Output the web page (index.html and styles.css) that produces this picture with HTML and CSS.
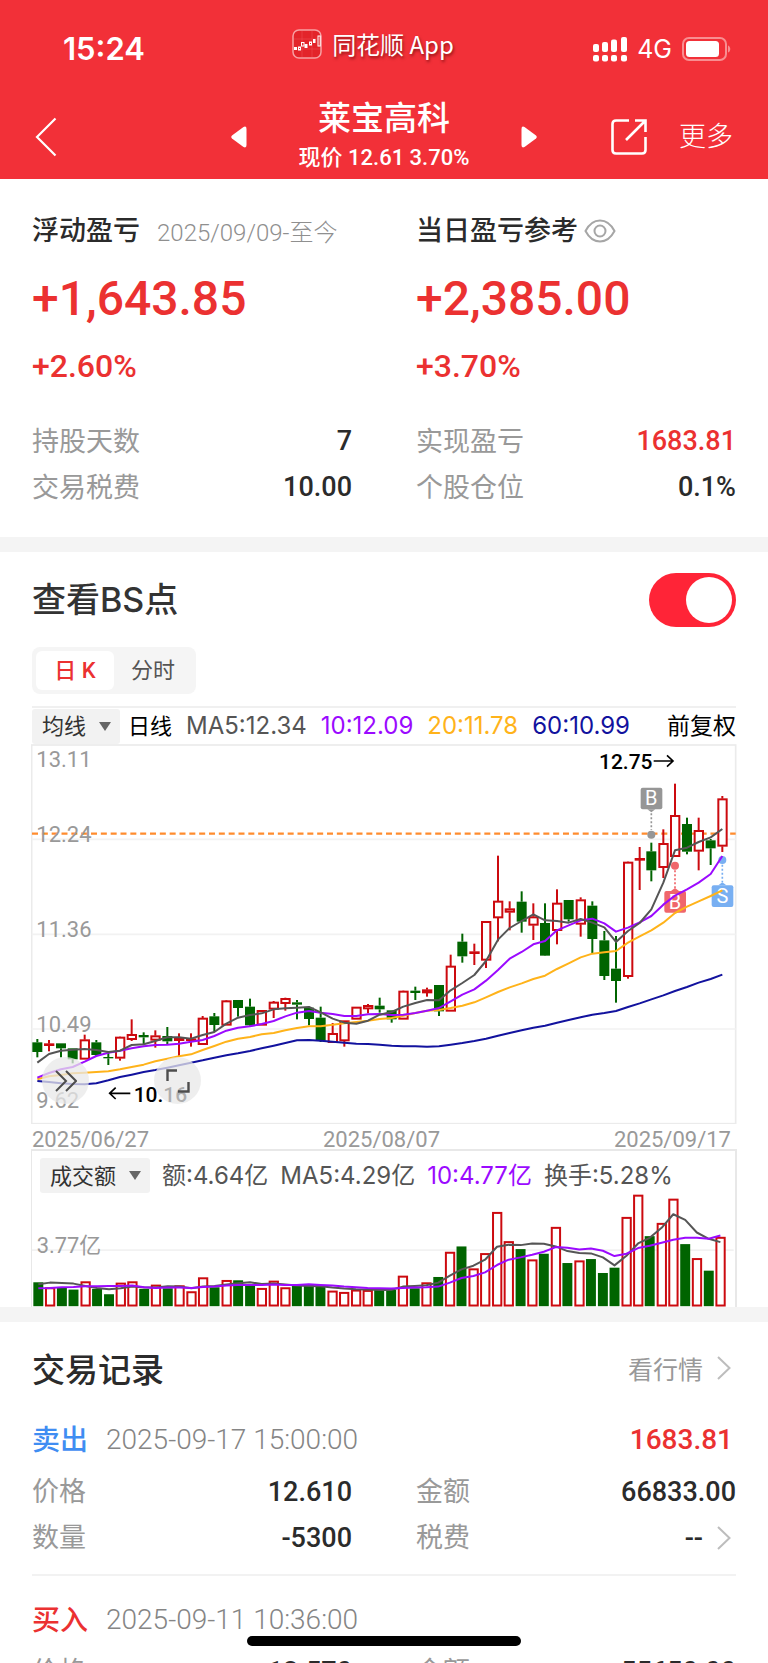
FILE: index.html
```html
<!DOCTYPE html>
<html lang="zh-CN">
<head>
<meta charset="utf-8">
<meta name="viewport" content="width=device-width, initial-scale=1">
<title>莱宝高科 - 持仓盈亏</title>
<link rel="stylesheet" href="styles.css">
</head>
<body>
<div class="app">
  <header class="header">
    <div class="status">
      <time class="status-time">15:24</time>
      <div class="brand">
        <svg class="brand-icon" width="30" height="30" viewBox="0 0 30 30" aria-hidden="true">
          <rect x="1" y="1" width="28" height="28" rx="6" fill="#e3242a" stroke="#f7a0a3" stroke-width="1.5"/>
          <path d="M2 10h26M2 20h26M10 2v26M20 2v26" stroke="#ee4a50" stroke-width=".6"/>
          <path d="M2 18h3v3H2zM12.500 15h3v4h-3zM21 10h2.500v4H21z" fill="#fff"/>
          <g fill="none" stroke="#fff"><rect x="6.500" y="18" width="2" height="3"/><rect x="9.500" y="13.500" width="2.500" height="3.500"/><rect x="17.500" y="13" width="2" height="3"/><rect x="26" y="7" width="2.200" height="10"/></g>
        </svg>
        <span>同花顺 App</span>
      </div>
      <div class="status-right">
        <svg width="34" height="25" viewBox="0 0 34 25" fill="#fff" aria-hidden="true">
          <rect x="0" y="7" width="6" height="8" rx="2"/><rect x="9" y="5" width="6" height="10" rx="2"/><rect x="18" y="2.500" width="6" height="12.500" rx="2"/><rect x="28" y="0" width="6" height="15" rx="2"/>
          <rect x="0" y="18" width="6" height="6.500" rx="2"/><rect x="9" y="18" width="6" height="6.500" rx="2"/><rect x="18" y="18" width="6" height="6.500" rx="2"/><rect x="28" y="18" width="6" height="6.500" rx="2"/>
        </svg>
        <span>4G</span>
        <svg width="50" height="24" viewBox="0 0 50 24" aria-hidden="true">
          <rect x="1" y="1" width="43" height="22" rx="6" fill="none" stroke="#f88e91" stroke-width="2"/>
          <rect x="4" y="4" width="33" height="16" rx="3.500" fill="#fff"/>
          <path d="M46 8.500c3 1 3 6 0 7z" fill="#f88e91"/>
        </svg>
      </div>
    </div>
    <nav class="nav">
      <button class="icon-btn back" aria-label="返回"><svg width="22" height="40" viewBox="0 0 22 40"><path d="M20.500 1.500 2 20l18.500 18.500" fill="none" stroke="#fff" stroke-width="2.200"/></svg></button>
      <div class="stock">
        <button class="icon-btn" aria-label="上一只"><svg width="16" height="22" viewBox="0 0 16 22"><path d="M12.500 1Q15.500-.5 15.500 3v16q0 3.500-3 2L1 12.500q-1.500-1.500 0-3z" fill="#fff"/></svg></button>
        <div class="stock-text">
          <h1>莱宝高科</h1>
          <p>现价 12.61 3.70%</p>
        </div>
        <button class="icon-btn" aria-label="下一只"><svg width="16" height="22" viewBox="0 0 16 22"><path d="M3.500 1Q.5-.5.5 3v16q0 3.500 3 2L15 12.500q1.500-1.500 0-3z" fill="#fff"/></svg></button>
      </div>
      <div class="actions">
        <button class="icon-btn" aria-label="分享"><svg width="36" height="36" viewBox="0 0 36 36" fill="none" stroke="#fff" stroke-width="2.600"><path d="M18 1.500H5Q1.500 1.500 1.500 5v26q0 3.500 3.500 3.500h26q3.500 0 3.500-3.500V18M24 1.500h10.500V13M34.500 1.500 15 21"/></svg></button>
        <button class="more">更多</button>
      </div>
    </nav>
  </header>

  <main class="main">
    <section class="summary">
      <article>
        <div class="sum-head"><h2>浮动盈亏</h2><span class="range">2025/09/09-至今</span></div>
        <p class="big">+1,643.85</p>
        <p class="pct">+2.60%</p>
        <dl class="pairs"><div><dt>持股天数</dt><dd>7</dd></div><div><dt>交易税费</dt><dd>10.00</dd></div></dl>
      </article>
      <article>
        <div class="sum-head"><h2>当日盈亏参考</h2><button class="icon-btn eye" aria-label="显示或隐藏"><svg width="32" height="24" viewBox="0 0 32 24" fill="none" stroke="#a6a6a6" stroke-width="2"><path d="M1.500 12Q7 1.500 16 1.500T30.500 12Q25 22.500 16 22.500T1.500 12z"/><circle cx="16" cy="12" r="5.500"/></svg></button></div>
        <p class="big">+2,385.00</p>
        <p class="pct">+3.70%</p>
        <dl class="pairs"><div><dt>实现盈亏</dt><dd class="up">1683.81</dd></div><div><dt>个股仓位</dt><dd>0.1%</dd></div></dl>
      </article>
    </section>

    <section class="bs">
      <div class="bs-head">
        <label for="bs-toggle">查看BS点</label>
        <input type="checkbox" role="switch" id="bs-toggle" class="toggle" checked>
      </div>
      <div class="segments">
        <button class="seg active">日 K</button><button class="seg">分时</button>
      </div>
      <div class="indicator">
        <div class="picker">
          <select aria-label="指标"><option>均线</option></select>
          <svg width="12" height="9" viewBox="0 0 12 9" aria-hidden="true"><path d="M0 0h12L6 9z" fill="#666"/></svg>
        </div>
        <span class="black">日线</span>
        <div class="values">
          <span class="c5">MA5:12.34</span><span class="c10">10:12.09</span><span class="c20">20:11.78</span><span class="c60">60:10.99</span>
        </div>
        <span class="black adj">前复权</span>
      </div>
      <div class="chart">
        <svg id="kline" viewBox="0 12 2118 1141" role="img" aria-label="日K线"></svg>
        <button class="round round-next" aria-label="展开"><svg width="22" height="22" viewBox="0 0 22 22" fill="none" stroke="#4d4d4d" stroke-width="2"><path d="m1 1 10 10L1 21M11 1l10 10-10 10"/></svg></button>
        <button class="round round-full" aria-label="全屏"><svg width="24" height="24" viewBox="0 0 24 24" fill="none" stroke="#4d4d4d" stroke-width="2.400"><path d="M11 1.500H1.500V12M22.500 13v9.500H12"/></svg></button>
      </div>
      <div class="dates"><time>2025/06/27</time><time>2025/08/07</time><time>2025/09/17</time></div>
      <div class="volume">
        <div class="indicator vol-head">
          <div class="picker">
            <select aria-label="副图"><option>成交额</option></select>
            <svg width="12" height="9" viewBox="0 0 12 9" aria-hidden="true"><path d="M0 0h12L6 9z" fill="#666"/></svg>
          </div>
          <span class="c5">额:4.64亿</span><span class="c5">MA5:4.29亿</span><span class="c10">10:4.77亿</span><span class="c5">换手:5.28%</span>
        </div>
        <svg id="vol" viewBox="0 222 2118 339" role="img" aria-label="成交额"></svg>
      </div>
    </section>

    <section class="records">
      <div class="rec-title"><h2>交易记录</h2><a href="#quote">看行情<svg width="14" height="24" viewBox="0 0 14 24"><path d="m1 1 11.500 11L1 23" fill="none" stroke="#bdbdbd" stroke-width="2"/></svg></a></div>
      <article class="record">
        <div class="rec-head"><span class="side sell">卖出</span><time>2025-09-17 15:00:00</time><strong>1683.81</strong></div>
        <dl class="rec-grid">
          <div><dt>价格</dt><dd>12.610</dd></div><div><dt>金额</dt><dd>66833.00</dd></div>
          <div><dt>数量</dt><dd>-5300</dd></div><div><dt>税费</dt><dd>--<svg width="14" height="24" viewBox="0 0 14 24"><path d="m1 1 11.500 11L1 23" fill="none" stroke="#bdbdbd" stroke-width="2"/></svg></dd></div>
        </dl>
      </article>
      <article class="record">
        <div class="rec-head"><span class="side buy">买入</span><time>2025-09-11 10:36:00</time></div>
        <dl class="rec-grid"><div><dt>价格</dt><dd>12.570</dd></div><div><dt>金额</dt><dd>55650.00</dd></div></dl>
      </article>
    </section>
  </main>
  <div class="home-bar"></div>
</div>
<script src="chart.js"></script>
</body>
</html>
```

FILE: styles.css
```css
* { box-sizing: border-box; margin: 0; padding: 0; }

html, body { height: 100%; }

body {
  font-family: Roboto, "Noto Sans CJK SC", sans-serif;
  color: #2b2b2b;
  background: #fff;
}

button, select, input { font: inherit; color: inherit; border: 0; background: none; appearance: none; }
svg { display: block; }

.app {
  position: relative;
  height: 100vh;
  display: flex;
  flex-direction: column;
  overflow: hidden;
}

/* header */
.header { flex: none; height: 179px; background: #f23038; color: #fff; }

.status {
  display: grid;
  grid-template-columns: 1fr auto 1fr;
  align-items: center;
  height: 98px;
  padding: 0 36px 0 14px;
}
.status-time { padding-left: 49px; font: 600 31px/40px Inter, sans-serif; }
.brand {
  display: flex;
  align-items: center;
  gap: 10px;
  padding-bottom: 10px;
  font: 400 24px/36px "Noto Sans CJK SC", sans-serif;
  text-shadow: 1px 2px 3px rgba(80, 0, 0, .6);
}
.status-right {
  display: flex;
  align-items: center;
  justify-content: flex-end;
  gap: 10px;
  font: 400 25px/36px Inter, sans-serif;
}

.nav {
  display: grid;
  grid-template-columns: 1fr auto 1fr;
  align-items: center;
  height: 76px;
  padding: 0 35px;
}
.icon-btn { display: flex; flex: none; cursor: pointer; }
.stock { display: flex; align-items: center; gap: 52px; }
.stock-text { text-align: center; }
.stock h1 { font-size: 33px; font-weight: 500; line-height: 42px; }
.stock p { font-size: 22px; font-weight: 500; line-height: 36px; }
.actions { display: flex; align-items: center; justify-content: flex-end; gap: 32px; }
.more { font-size: 27px; line-height: 40px; font-weight: 300; }

/* summary */
.main { flex: 1; min-height: 0; overflow: hidden; }

.summary {
  display: grid;
  grid-template-columns: 1fr 1fr;
  gap: 64px;
  padding: 32px 32px 27px;
}
.sum-head { display: flex; align-items: center; height: 40px; }
.sum-head h2 { font-size: 27px; font-weight: 500; line-height: 40px; }
.range { margin-left: 17px; padding-bottom: 2px; font-size: 24px; font-weight: 300; color: #8f8f8f; }
.eye { margin-left: 6px; }
.big { margin-top: 18px; font-size: 48px; font-weight: 500; line-height: 60px; color: #eb3131; }
.pct { margin-top: 17px; font-size: 32px; font-weight: 500; line-height: 40px; color: #eb3131; }
.pairs { margin-top: 32px; }
.pairs div, .rec-grid div { display: flex; justify-content: space-between; align-items: center; height: 46px; }
dt { padding-bottom: 4px; font-size: 27px; font-weight: 400; color: #999; }
dd { display: flex; align-items: center; font-size: 27px; font-weight: 500; }
.up { color: #eb3131; }

/* chart section */
.bs { padding: 0 32px; border-top: 15px solid #f4f4f4; border-bottom: 15px solid #f4f4f4; }
.bs-head { display: flex; justify-content: space-between; align-items: center; height: 95px; }
.bs-head label { padding-bottom: 4px; font-family: Inter, "Noto Sans CJK SC", sans-serif; font-size: 34px; font-weight: 500; color: #333; }
.toggle {
  width: 87px;
  height: 54px;
  padding: 4px;
  border-radius: 27px;
  background: #ccc;
  display: flex;
  cursor: pointer;
}
.toggle:checked { background: #ff2437; justify-content: flex-end; }
.toggle::before { content: ""; width: 46px; height: 46px; border-radius: 50%; background: #fff; }

.segments {
  display: inline-flex;
  vertical-align: top;
  padding: 4px;
  border-radius: 8px;
  background: #f5f5f5;
}
.seg { width: 78px; height: 39px; border-radius: 6px; font-size: 22px; line-height: 39px; color: #555; cursor: pointer; }
.seg.active { background: #fff; color: #eb3131; font-weight: 500; }

.indicator {
  display: flex;
  align-items: center;
  font: 400 22px/34px Inter, "Noto Sans CJK SC", sans-serif;
  white-space: nowrap;
}
.bs > .indicator { margin-top: 12px; border-top: 2px solid #f0f0f0; height: 38px; gap: 8px; }
.picker { position: relative; display: flex; align-items: center; background: #f2f2f2; border-radius: 3px; color: #333; }
.picker select { height: 35px; padding: 0 33px 0 10px; }
.picker svg { position: absolute; right: 9px; pointer-events: none; }
.values { display: flex; gap: 14px; margin-left: 6px; font-size: 24px; }
.black { color: #000; }
.adj { margin-left: auto; font-size: 23px; }
.c5 { color: #555; }
.c10 { color: #9b0aff; }
.c20 { color: #ffb31a; }
.c60 { color: #12129e; }

.chart { position: relative; margin: 0 -1px; }
.chart > svg, .volume > svg { width: 100%; height: auto; }
.round {
  position: absolute;
  bottom: 20px;
  width: 47px;
  height: 47px;
  border-radius: 50%;
  display: flex;
  align-items: center;
  justify-content: center;
  background: rgba(232, 232, 232, .75);
  cursor: pointer;
}
.round-next { left: 11px; }
.round-full { left: 123px; }

.dates {
  display: flex;
  justify-content: space-between;
  height: 25px;
  padding-right: 5px;
  font-size: 22px;
  line-height: 31px;
  color: #999;
}

.volume { margin: 0 -1px; border: 1px solid #e8e8e8; border-width: 2px 2px 0 1px; }
.vol-head { height: 43px; padding-left: 8px; padding-top: 6px; gap: 12px; }
.vol-head > span { font-size: 24px; }

/* trade records */
.records { padding: 0 32px; }
.rec-title { display: flex; justify-content: space-between; align-items: center; height: 93px; }
.rec-title h2 { font-size: 33px; font-weight: 500; }
.rec-title a { display: flex; align-items: center; gap: 14px; padding-right: 5px; font-size: 25px; font-weight: 400; color: #999; text-decoration: none; }
.record { padding: 0 0 13px; border-bottom: 2px solid #f2f2f2; }
.record + .record { padding-top: 19px; }
.rec-head { display: flex; align-items: center; height: 50px; }
.side { padding-bottom: 4px; font-size: 28px; font-weight: 500; }
.sell { color: #3f8df2; }
.buy { color: #eb3131; }
.rec-head time { margin-left: 18px; font-size: 28px; font-weight: 300; color: #858585; }
.rec-head strong { margin-left: auto; padding-right: 3px; font-size: 28px; font-weight: 500; color: #eb3131; }
.rec-grid { display: grid; grid-template-columns: 1fr 1fr; column-gap: 64px; padding-top: 4px; }
.rec-grid dd svg { margin: 0 5px 0 14px; }

.home-bar {
  position: absolute;
  left: 50%;
  bottom: 17px;
  width: 274px;
  height: 10px;
  margin-left: -137px;
  border-radius: 5px;
  background: #000;
}
```

FILE: chart.js
```javascript
// Each candle: direction, high, low, body top, body bottom (y in chart units)
const candles = `G 897 952 907 936;R 900 934 911 916;G 910 952 910 925;G 925 970 925 958;R 884 958 899 958;G 900 948 907 945;G 937 975 951 955;R 890 962 891 955;R 838 903 883 899;G 877 914 885 892;R 871 923 887 901;G 861 912 888 904;R 880 948 895 902;R 880 920 896 902;R 828 915 834 914;G 819 875 829 855;R 780 856 782 856;G 780 830 780 804;G 776 860 800 856;R 811 856 811 856;R 783 834 786 808;R 773 812 775 791;G 780 838 787 794;G 800 856 803 837;G 800 906 833 902;R 849 908 880 908;R 842 920 842 903;R 801 838 801 838;R 792 820 796 807;G 773 818 797 808;G 811 848 811 838;R 752 838 753 838;G 740 780 752 759;R 743 770 749 759;G 735 828 735 814;R 644 814 678 814;G 581 668 605 649;R 611 675 635 641;R 544 684 544 661;R 347 604 483 534;R 484 571 506 517;G 454 578 485 545;R 490 600 530 556;G 490 646 549 647;R 448 613 489 572;G 480 545 480 538;R 472 590 479 553;G 484 640 497 597;G 573 720 601 708;G 588 788 686 723;R 365 716 366 710;R 321 450 355 360;G 308 424 334 391;R 268 414 310 383;R 131 350 226 350;G 233 343 252 335;R 233 391 271 334;G 297 375 301 325;R 168 336 176 319`
  .split(";").map(r => { const p = r.split(" "); return [p[0], ...p.slice(1).map(Number)]; });

const averages = {
  "#12129e": [1023,1026,1030,1032,1033,1030,1021,1011,1004,996,990,983,976,968,961,953,946,940,933,925,917,909,901,900,902,905,908,911,912,914,917,919,919,920,919,914,909,903,896,887,879,871,863,857,848,840,832,824,819,813,801,790,778,766,753,741,728,717,704],
  "#ffb31a": [1018,1009,1005,1000,998,996,994,988,981,974,964,956,949,943,930,918,905,896,891,883,879,871,864,859,859,854,850,846,842,837,834,827,819,812,810,804,797,787,772,756,742,730,717,707,687,670,652,641,637,633,608,589,571,548,519,500,484,468,451],
  "#9b0aff": [1013,999,988,981,965,948,938,932,925,919,915,914,911,905,900,888,872,863,859,852,843,829,818,813,818,822,828,828,823,822,825,824,819,812,804,784,764,748,722,690,656,636,613,603,571,556,541,536,550,575,563,547,528,494,467,448,428,402,348],
  "#555555": [968,942,932,929,927,930,936,932,915,913,903,892,892,896,885,876,851,833,825,820,808,805,803,801,817,836,848,851,842,824,816,800,789,780,781,751,729,705,663,599,564,543,523,541,543,548,537,548,562,606,573,549,508,428,331,323,306,292,267]
};

const turnover = [488,504,505,510,486,508,524,490,486,508,496,506,498,516,474,503,482,482,498,506,484,504,497,497,497,514,518,511,512,510,511,469,506,489,472,397,380,447,401,277,365,388,420,402,322,430,423,418,460,444,292,225,349,310,237,373,416,453,352];
const turnoverAverages = {
  "#555555": [494,489,490,492,499,505,509,506,501,504,504,500,501,506,501,499,495,491,488,493,492,495,498,499,500,504,507,509,510,511,511,501,499,497,489,468,449,438,420,381,375,376,371,372,380,394,400,401,413,437,408,371,354,324,283,300,338,357,367],
  "#9b0aff": [506,505,503,502,500,500,499,499,498,503,505,504,504,505,502,501,498,496,496,496,495,496,496,494,496,498,501,503,505,506,507,505,504,503,501,489,475,469,458,436,420,413,405,396,382,384,389,386,393,409,402,385,378,369,360,354,354,357,347]
};

const RED = "#cc0a0f", GREEN = "#006400";
const xAt = i => Math.round(19 + 35.43 * i);
const line = (x1, y1, x2, y2, stroke, w, extra = "") =>
  `<line x1="${x1}" y1="${y1}" x2="${x2}" y2="${y2}" stroke="${stroke}" stroke-width="${w}" ${extra}/>`;
const curve = (ys, c) =>
  `<polyline points="${ys.map((y, i) => xAt(i) + "," + y).join(" ")}" fill="none" stroke="${c}" stroke-width="6" stroke-linejoin="round"/>`;
const label = (x, y, t, fill = "#999", size = 66, weight = 400, anchor = "start") =>
  `<text x="${x}" y="${y}" fill="${fill}" font-size="${size}" font-weight="${weight}" text-anchor="${anchor}">${t}</text>`;
const box = (dir, x, top, bottom) => dir === "R"
  ? `<rect x="${x - 12}" y="${top + 2}" width="25" height="${Math.max(bottom - top - 4, 2)}" fill="#fff" stroke="${RED}" stroke-width="6"/>`
  : `<rect x="${x - 15}" y="${top}" width="30" height="${bottom - top}" fill="${GREEN}"/>`;

// Trade marker: dot on the price, dotted stem, lettered tag
function marker(i, letter, color, dotY, tagY) {
  const x = xAt(i), below = tagY > dotY;
  const tip = below ? tagY - 9 : tagY + 74, base = below ? tagY : tagY + 65;
  return `<g fill="${color}"><circle cx="${x}" cy="${dotY}" r="12"/>` +
    line(x, below ? dotY + 14 : tip + 3, x, below ? tip : dotY - 14, color, 5, 'stroke-dasharray="6 6"') +
    `<path d="M${x - 12} ${base}L${x} ${tip}L${x + 12} ${base}z"/>` +
    `<rect x="${x - 32}" y="${tagY}" width="65" height="65" rx="6"/></g>` +
    label(x, tagY + 53, letter, "#fff", 60, 400, "middle");
}

let k = '<rect x="2" y="15" width="2112" height="1136" fill="none" stroke="#ebebeb" stroke-width="5"/>';
[298, 583, 867].forEach(y => { k += line(2, y, 2114, y, "#f2f2f2", 5); });
k += line(3, 281, 2114, 281, "#ff8c2e", 7, 'stroke-dasharray="18 11.500"');
candles.forEach(([dir, high, low, top, bottom], i) => {
  const x = xAt(i), c = dir === "R" ? RED : GREEN;
  k += line(x, high, x, top, c, 6) + line(x, bottom, x, low, c, 6) + box(dir, x, top, bottom);
});
k += marker(52, "B", "#969696", 284, 143) + marker(54, "B", "#f0666b", 377, 453) + marker(58, "S", "#78aff2", 360, 436);
for (const c in averages) k += curve(averages[c], c);
[["13.11", 82], ["12.24", 307], ["11.36", 592], ["10.49", 877], ["9.62", 1103]].forEach(([t, y]) => { k += label(16, y, t); });
k += label(1704, 87, "12.75", "#000", 63, 500) +
  '<path d="M1868 63H1926M1908 46l18 17-18 17" fill="none" stroke="#000" stroke-width="5"/>' +
  label(308, 1086, "10.16", "#000", 63, 500) +
  '<path d="M298 1060H236M254 1043l-18 17 18 17" fill="none" stroke="#000" stroke-width="5"/>';
document.getElementById("kline").innerHTML = k;

let v = line(0, 391, 2114, 391, "#f2f2f2", 5);
turnover.forEach((top, i) => { v += box(candles[i][0], xAt(i), top, 560); });
for (const c in turnoverAverages) v += curve(turnoverAverages[c], c);
v += label(14, 400, "3.77亿");
document.getElementById("vol").innerHTML = v;
```
